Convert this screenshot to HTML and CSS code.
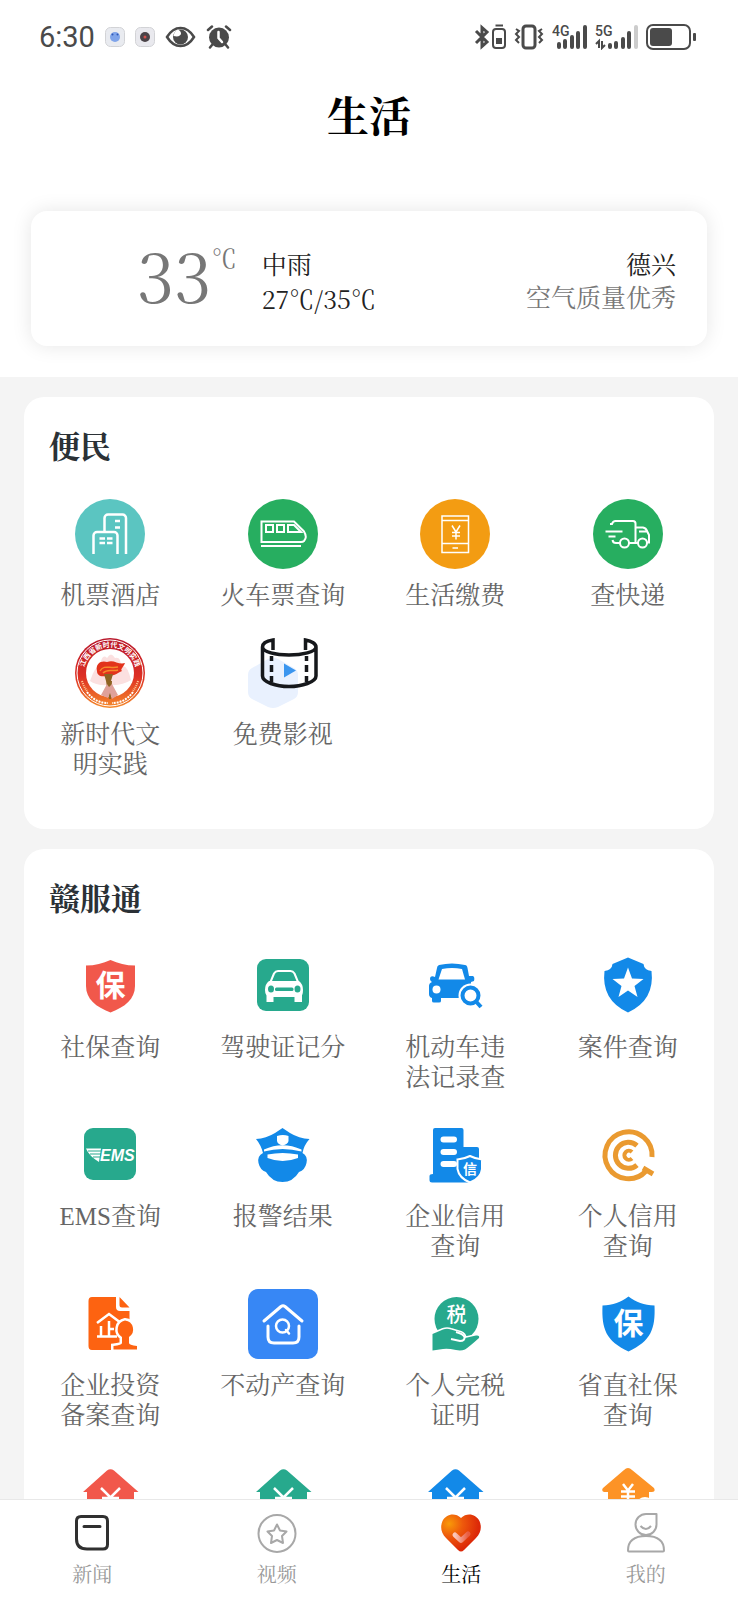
FILE: index.html
```html
<!DOCTYPE html>
<html lang="zh-CN">
<head>
<meta charset="UTF-8">
<meta name="viewport" content="width=device-width, initial-scale=1.0">
<title>生活</title>
<link rel="stylesheet" href="styles.css">
</head>
<body>

<main class="page">
    <header class="top">
        <div class="status">
            <div class="status-side">
                <span class="time">6:30</span>
                <svg width="20" height="20" viewBox="0 0 20 20"><rect x=".5" y=".5" width="19" height="19" rx="5" fill="#e9ebf0" stroke="#d2d3d6"/><circle cx="10" cy="10" r="5" fill="#7fa4ea"/><circle cx="7.500" cy="7.500" r="1" fill="#2f57b5"/><circle cx="12.500" cy="7.500" r="1" fill="#2f57b5"/></svg>
                <svg width="20" height="20" viewBox="0 0 20 20"><rect x=".5" y=".5" width="19" height="19" rx="5" fill="#e9e9ee" stroke="#d2d3d6"/><circle cx="10" cy="10" r="5" fill="#4a4348"/><circle cx="10" cy="10" r="1.500" fill="#d2504c"/></svg>
                <svg width="31" height="22" viewBox="0 0 31 22"><path d="M2 11C6 4.500 10.500 2 15.500 2S25 4.500 29 11C25 17.500 20.500 20 15.500 20S6 17.500 2 11Z" fill="none" stroke="#4a4a4a" stroke-width="2.500"/><circle cx="15.500" cy="11" r="7.500" fill="#4a4a4a"/><path d="M13 3.500C18 6 17 12 8.500 10C9 7 10.500 4.500 13 3.500Z" fill="#fff"/></svg>
                <svg width="26" height="24" viewBox="0 0 26 24" fill="none" stroke="#4a4a4a" stroke-linecap="round"><circle cx="13" cy="12.500" r="10" fill="#4a4a4a" stroke="none"/><path d="M2 5L6 1.500M24 5L20 1.500M6 20L4 22.500M20 20L22 22.500" stroke-width="2.500"/><path d="M12.500 7V13L16 17" stroke="#fff" stroke-width="2.500"/></svg>
            </div>
            <div class="status-side right">
                <svg width="32" height="26" viewBox="0 0 32 26" fill="none" stroke="#4a4a4a" stroke-width="3"><path d="M2 7L13 18L8 22.500V3.500L13 8L2 19"/><rect x="19" y="5" width="12" height="19" rx="3" stroke-width="2"/><path d="M21.500 1.500H29" stroke-width="2"/><rect x="22" y="14" width="6" height="6" fill="#4a4a4a" stroke="none"/></svg>
                <svg width="30" height="26" viewBox="0 0 30 26" fill="none" stroke="#4a4a4a" stroke-width="2"><rect x="9" y="2" width="12" height="22" rx="3" stroke-width="3"/><path d="M2 5L5 7L2 10L5 13L2 16L5 19M28 5L25 7L28 10L25 13L28 16L25 19"/></svg>
                <svg width="35" height="26" viewBox="0 0 35 26"><text class="net" x="0" y="12">4G</text><path d="M7 23V20M13 23V17M20 23V13M26 23V9M33 23V3" stroke="#4a4a4a" stroke-width="4" stroke-linecap="round"/></svg>
                <svg width="43" height="26" viewBox="0 0 43 26"><text class="net" x="0" y="12">5G</text><path d="M4 24V17L1 20M7 17V24L10 21" fill="none" stroke="#4a4a4a" stroke-width="2"/><path d="M15 23V21M21 23V19M28 23V15M34 23V9" stroke="#4a4a4a" stroke-width="4" stroke-linecap="round"/><path d="M41 23V3" stroke="#ccc" stroke-width="4" stroke-linecap="round"/></svg>
                <svg width="50" height="26" viewBox="0 0 50 26"><rect x="1" y="1" width="43" height="24" rx="6" fill="none" stroke="#4a4a4a" stroke-width="2"/><rect x="4" y="4" width="22" height="18" rx="3" fill="#4a4a4a"/><rect x="47" y="9" width="3" height="8" rx="1" fill="#4a4a4a"/></svg>
            </div>
        </div>
        <h1>生活</h1>
        <section class="weather">
            <span class="temp">33</span>
            <span class="unit">℃</span>
            <div class="sky">
                <div>中雨</div>
                <div class="range">27℃/35℃</div>
            </div>
            <div class="city">
                <div>德兴</div>
                <div class="air">空气质量优秀</div>
            </div>
        </section>
    </header>

    <section class="card">
        <h2>便民</h2>
        <div class="grid">
            <a href="#">
                <svg class="icon" viewBox="0 0 70 70" fill="none" stroke="#fff" stroke-width="2.500"><circle cx="35" cy="35" r="35" fill="#5bc5c1" stroke="none"/><path d="M29.500 33V19a3.500 3.500 0 0 1 3.500-3.500H47.500a3.500 3.500 0 0 1 3.500 3.500V55M18.500 55V36.500a3.500 3.500 0 0 1 3.500-3.500H39a3.500 3.500 0 0 1 3.500 3.500V55M40 22H45M40 28.500H45M24.500 39.500H30M32 39.500H37.500M24.500 44H30M32 44H37.500"/></svg>
                <span>机票酒店</span>
            </a>
            <a href="#">
                <svg class="icon" viewBox="0 0 70 70" fill="none" stroke="#fff" stroke-width="2"><circle cx="35" cy="35" r="35" fill="#27ae60" stroke="none"/><path d="M13.500 22.500H46L56 32.500Q59.500 38 56 42Q55 43 53 43H13.500ZM13 47H53M18 26H25V33H18ZM29 26H36V33H29ZM40 26H46L53 33H40Z"/></svg>
                <span>火车票查询</span>
            </a>
            <a href="#">
                <svg class="icon" viewBox="0 0 70 70" fill="none" stroke="#fff" stroke-width="1.500"><circle cx="35" cy="35" r="35" fill="#f39c12" stroke="none"/><path d="M22 17H48.500V53.500H22ZM22 21.500H48.500M22 44.500H48.500M32.500 49H38M32 26.500L36 33L40 26.500M36 33V40.500M32 33.500H40M32 37H40"/></svg>
                <span>生活缴费</span>
            </a>
            <a href="#">
                <svg class="icon" viewBox="0 0 70 70" fill="none" stroke="#fff" stroke-width="2"><circle cx="35" cy="35" r="35" fill="#27ae60" stroke="none"/><path d="M17 25H19Q20 22 22.500 22H40Q42.500 22 42.500 24.500V43.500M12.500 32.500H29.500M15.500 37.500H22.500M19.500 41Q20 44 23 44H27M36 44H45M42.500 28.500H50Q53 29 54 32L56 36V43.500H54M46 32.500H54"/><circle cx="31.500" cy="44" r="4.500"/><circle cx="49.500" cy="44" r="4.500"/></svg>
                <span>查快递</span>
            </a>
            <a href="#">
                <svg class="icon" viewBox="0 0 70 70">
                    <defs>
                        <linearGradient id="seal" x1="0" y1="0" x2="0" y2="1"><stop offset="0" stop-color="#b8172b"/><stop offset=".55" stop-color="#dd2f24"/><stop offset="1" stop-color="#f58a2b"/></linearGradient>
                        <path id="arc" d="M9.500 43A26.500 26.500 0 1 1 60.500 43"/>
                    </defs>
                    <circle cx="35" cy="35" r="35" fill="url(#seal)"/>
                    <circle cx="35" cy="35" r="33" fill="none" stroke="#fff" stroke-width="1"/>
                    <circle cx="35" cy="35" r="24" fill="#fff"/>
                    <path d="M15 43Q20 28 25 28Q27 15 32 20Q36 13 40 20Q46 18 46 29Q52 25 56 42Q47 48 35 47Q21 48 15 43Z" fill="#fbe0e0"/>
                    <text class="seal-text"><textPath href="#arc" startOffset="50%" text-anchor="middle">江西省新时代文明实践</textPath></text>
                    <path d="M22 33C20 25 27 22 32 24C39 21 43 27 50 25C48 30 45 31 47 33C41 36 39 38 31 38C25 39 22 37 22 33Z" fill="#e2331c"/>
                    <path d="M25 33C29 26 35 31 43 29M28 35C33 30 38 34 43 32" fill="none" stroke="#f58b2c" stroke-width="1.500"/>
                    <path d="M29 36H38L36 43H37L36 61H34L31 43Z" fill="#8e6322"/>
                    <path d="M26 57L32 46L34 49L37 46L43 57L37 61L35 55L33 60Z" fill="#dfa19a"/>
                    <path d="M12 54Q20 65 33 65M58 54Q50 65 37 65" fill="none" stroke="#fff" stroke-width="2" stroke-dasharray="2 1"/>
                    <path d="M7 43Q9 49 12 53M63 43Q61 49 58 53" fill="none" stroke="#ffc493" stroke-width="2" stroke-dasharray="1 1"/>
                </svg>
                <span>新时代文<br>明实践</span>
            </a>
            <a href="#">
                <svg class="icon" viewBox="0 0 70 70" fill="none" stroke="#16181b" stroke-width="3.500"><path d="M0 37Q0 32 4 30L20 21Q25 18 30 21L46 30Q50 32 50 37V54Q50 59 46 61L30 69Q25 71 20 69L4 61Q0 59 0 54Z" fill="#e9f1fe" stroke="none"/><path d="M25 12V2C18 3 14.500 6 14.500 9V38C14.500 44 28 48.500 41 48.500S68 44 68 38V9C68 6 64 3 57.500 2V12M14.500 9C14.500 14 28 17 41 17S68 14 68 9M23.500 18V23M23.500 27V34M23.500 38V44M58.500 18V23M58.500 27V34M58.500 38V44"/><path d="M36 25.500L48 32.500L36 39.500Z" fill="#3b96ef" stroke="none"/></svg>
                <span>免费影视</span>
            </a>
        </div>
    </section>

    <section class="card">
        <h2>赣服通</h2>
        <div class="grid">
            <a href="#">
                <svg class="icon" viewBox="0 0 70 70"><path d="M35.500 9C28 12.500 20 14.500 11 14.500V35C11 48 21 56 35.500 61.500C50 56 60 48 60 35V14.500C51 14.500 43 12.500 35.500 9Z" fill="#f1584b"/><text class="glyph bao" x="35.500" y="45">保</text></svg>
                <span>社保查询</span>
            </a>
            <a href="#">
                <svg class="icon" viewBox="0 0 70 70"><rect x="9" y="8" width="52" height="52" rx="9" fill="#27a98d"/><path d="M22.500 31L26 22.500Q27.500 20 30 20H42.500Q45 20 46.500 22.500L50 31" fill="none" stroke="#fff" stroke-width="2"/><path d="M21 30H51Q55 33 55 39Q55 43 54 44.500V51H46.500V46H25.500V51H18.500V44.500Q17 43 17 39Q17 33 21 30Z" fill="#fff"/><g fill="#27a98d"><ellipse cx="23" cy="38" rx="3" ry="3.500"/><ellipse cx="49.500" cy="38" rx="3" ry="3.500"/><rect x="27" y="36.500" width="18.500" height="3.500" rx="1.500"/></g></svg>
                <span>驾驶证记分</span>
            </a>
            <a href="#">
                <svg class="icon" viewBox="0 0 70 70"><path d="M19 14Q32 11 45 14Q47 14 47.500 17L49 25H53Q55 26 54 30L51 31V47H21V50Q21 51.500 19 51.500H14Q12 51.500 12 50V47Q9 46 9 43V35Q9 32 12 31Q9 29 10.500 26Q12 24.500 15 26L17 17Q17 15 19 14Z" fill="#1289e8"/><path d="M22 18Q32 16 42 18L45 28.500H18.500Z" fill="#fff"/><circle cx="16.500" cy="38.500" r="4" fill="#fff"/><circle cx="50.500" cy="44.500" r="12" fill="#fff"/><circle cx="50.500" cy="44.500" r="8" fill="#fff" stroke="#1289e8" stroke-width="4"/><path d="M56 50.500L61 56" stroke="#1289e8" stroke-width="4"/></svg>
                <span>机动车违<br>法记录查</span>
            </a>
            <a href="#">
                <svg class="icon" viewBox="0 0 70 70"><path d="M35 6.500L50.500 13Q51 19 58.500 20Q62 49 35 61.500Q8 49 11.500 20Q19 19 19.500 13Z" fill="#1289e8"/><path d="M35 16.500L39 27.500L50.500 28L41.500 35L44.500 46L35 39.500L25.500 46L28.500 35L19.500 28L31 27.500Z" fill="#fff"/></svg>
                <span>案件查询</span>
            </a>
            <a href="#">
                <svg class="icon" viewBox="0 0 70 70"><rect x="9" y="8" width="52" height="52" rx="9" fill="#27a98d"/><path d="M11 28.500H26L24 42Q14 36 11 28.500Z" fill="#fff"/><path d="M13 31H26M15 34H26M18 37H26" stroke="#27a98d" stroke-width="1"/><text class="ems" x="25" y="41">EMS</text></svg>
                <span>EMS查询</span>
            </a>
            <a href="#">
                <svg class="icon" viewBox="0 0 70 70"><path d="M34.500 8L42 13Q51 18.500 61.500 19Q56 25 54.500 33Q60 36 58.500 43Q57 50 51 52Q45 62 34.500 62T18 52Q12 50 10.500 43Q9 36 15 33Q13 25 8 19Q18 18.500 27 13Z" fill="#1289e8"/><path d="M29 16Q35 14 40.500 16V21Q40 24 34.500 25.500Q29.500 24 29 21Z" fill="#fff"/><path d="M16 29.500Q34.500 21 53.500 29.500V31.500Q34.500 26.500 16 31.500ZM19.500 34.500Q34.500 31.500 50 34.500V38Q34.500 44 19.500 38Z" fill="#fff"/></svg>
                <span>报警结果</span>
            </a>
            <a href="#">
                <svg class="icon" viewBox="0 0 70 70"><path d="M15 8H41.500Q43.500 8 43.500 10V27H57Q59 27 59 29V48L50 62.500H12Q9.500 62.500 9.500 60V56Q9.500 54 13 54V10Q13 8 15 8Z" fill="#1289e8"/><path d="M23.500 19.500H34M23.500 32H34M23.500 44H34" stroke="#fff" stroke-width="6" stroke-linecap="round"/><path d="M50 36Q44 39 37.500 39.500V49Q39 58 50 62.500Q61 58 62 49V39.500Q56 39 50 36Z" fill="#1289e8" stroke="#fff" stroke-width="2"/><text class="glyph xin" x="50" y="54">信</text></svg>
                <span>企业信用<br>查询</span>
            </a>
            <a href="#">
                <svg class="icon" viewBox="0 0 70 70" fill="none" stroke="#ea9a30" stroke-width="5"><path d="M53 51A23.500 23.500 0 1 1 59 37M50 48L60 54M44 25.500A13 13 0 1 0 44 45"/><path d="M39 32A4.500 4.500 0 1 0 39 38.500" stroke-width="4"/></svg>
                <span>个人信用<br>查询</span>
            </a>
            <a href="#">
                <svg class="icon" viewBox="0 0 70 70"><path d="M17 8H41V18Q41 22 45 22H54.500V40L50 61H17Q13.500 61 13.500 57V12Q13.500 8 17 8ZM44.500 8L54.500 18.500H47Q44.500 18.500 44.500 16Z" fill="#fd6311"/><path d="M22 34L34 25L46 34M34 32V47M26 37V47M34 40H39M22 47.500H42" fill="none" stroke="#fff" stroke-width="2.500"/><path d="M50 31.500A9 9 0 0 1 54 48V54Q54 56 62 57V60.500H38.500V57Q47 56 47 54V48A9 9 0 0 1 50 31.500Z" fill="#fd6311" stroke="#fff" stroke-width="5" paint-order="stroke"/></svg>
                <span>企业投资<br>备案查询</span>
            </a>
            <a href="#">
                <svg class="icon" viewBox="0 0 70 70" fill="none" stroke="#fff" stroke-width="3" stroke-linecap="round" stroke-linejoin="round"><rect width="70" height="70" rx="10" fill="#3787f5" stroke="none"/><path d="M16 32L33 17.500Q35 16 37 17.500L54 32M20 37V48Q20 54 26 54H45Q51 54 51 48V37"/><circle cx="34.500" cy="37" r="6.500" stroke-width="2.500"/><path d="M38 41L41 44.500" stroke-width="2.500"/></svg>
                <span>不动产查询</span>
            </a>
            <a href="#">
                <svg class="icon" viewBox="0 0 70 70"><circle cx="36.500" cy="30" r="22" fill="#27a98d"/><path d="M12.500 45L23 40.500Q27 39 31 40.500L41 43.500Q45 45 45 49L56 46.500Q60 46 59 49Q49 58 45 60.500Q41 62 36 61Q27 59 23 60L12.500 61.500Z" fill="#27a98d" stroke="#fff" stroke-width="3" paint-order="stroke"/><path d="M31 50L40 52Q45 52 44.500 48Q43.500 45 36 43" fill="none" stroke="#fff" stroke-width="2"/><text class="glyph shui" x="36.500" y="33">税</text></svg>
                <span>个人完税<br>证明</span>
            </a>
            <a href="#">
                <svg class="icon" viewBox="0 0 70 70"><path d="M35.500 7.500C28 13 20 16 9.500 16.500C8.500 40 13 52 35.500 62.500C58 52 62.500 40 61.500 16.500C51 16 43 13 35.500 7.500Z" fill="#1289e8"/><text class="glyph bao" x="35.500" y="45">保</text></svg>
                <span>省直社保<br>查询</span>
            </a>
            <a href="#">
                <svg class="icon" viewBox="0 0 70 70"><path d="M32 12.500Q35.500 10 39 12.500L63.500 34H59V62H12V34H8Z" fill="#f1584b"/><path d="M26 30L35.500 39.500L45 30M35.500 40V55M27 40H44M27 47H44" fill="none" stroke="#fff" stroke-width="2.500"/></svg>
            </a>
            <a href="#">
                <svg class="icon" viewBox="0 0 70 70"><path d="M32 12.500Q35.500 10 39 12.500L63.500 34H59V62H12V34H8Z" fill="#27a98d"/><path d="M26 30L35.500 39.500L45 30M35.500 40V55M27 40H44M27 47H44" fill="none" stroke="#fff" stroke-width="2.500"/></svg>
            </a>
            <a href="#">
                <svg class="icon" viewBox="0 0 70 70"><path d="M32 12.500Q35.500 10 39 12.500L63.500 34H59V62H12V34H8Z" fill="#1289e8"/><path d="M26 30L35.500 39.500L45 30M35.500 40V55M27 40H44M27 47H44" fill="none" stroke="#fff" stroke-width="2.500"/></svg>
            </a>
            <a href="#">
                <svg class="icon" viewBox="0 0 70 70"><path d="M31 12Q35 8 39 12L61 30Q63 34 59 34H56V62H15V34H11Q8 33 10 30Z" fill="#fd9326"/><path d="M30 26L35 32.500L40 26M35 32V45M28 33.500H42M28 38.500H42" fill="none" stroke="#fff" stroke-width="2.500"/><circle cx="52" cy="48" r="9" fill="#fff"/></svg>
            </a>
        </div>
    </section>
</main>

<nav class="tabs">
    <a href="#">
        <svg class="tab-icon" viewBox="0 0 40 40" fill="none" stroke="#303030" stroke-width="3" stroke-linecap="round"><path d="M9 3.500H31Q35.500 3.500 35.500 8V31.500Q35.500 36 31 36H15Q4.500 36 4.500 26V8Q4.500 3.500 9 3.500ZM12 13.500H28"/></svg>
        <span>新闻</span>
    </a>
    <a href="#">
        <svg class="tab-icon" viewBox="0 0 40 40" fill="none" stroke="#a8a8a8" stroke-width="2" stroke-linejoin="round"><circle cx="20" cy="20.500" r="18.500"/><path d="M20 11.500L23 17.500L29.500 18.500L25 23L26 30L20 27L14 30L15 23L10.500 18.500L17 17.500Z"/></svg>
        <span>视频</span>
    </a>
    <a href="#" class="active">
        <svg class="tab-icon" viewBox="0 0 40 40">
            <defs>
                <radialGradient id="heart" cx=".2" cy=".25" r=".75"><stop offset="0" stop-color="#f99a08"/><stop offset=".45" stop-color="#ee5a0c"/><stop offset="1" stop-color="#dc2808"/></radialGradient>
                <linearGradient id="tick" x1="0" y1="0" x2="1" y2="0"><stop offset="0" stop-color="#fbc7bb"/><stop offset="1" stop-color="#e95c40"/></linearGradient>
            </defs>
            <path d="M20 5C14-1 5 1 1.500 8C-1 14 0 20 5 25L17 37Q20 40 23 37L35 25C40 20 41 14 38.500 8C35 1 26-1 20 5Z" fill="url(#heart)"/>
            <path d="M14 22L20 27.500L27 21" fill="none" stroke="url(#tick)" stroke-width="5" stroke-linecap="round" stroke-linejoin="round"/>
        </svg>
        <span>生活</span>
    </a>
    <a href="#">
        <svg class="tab-icon" viewBox="0 0 40 40" fill="none" stroke="#a8a8a8" stroke-width="2" stroke-linejoin="round"><path d="M30.500 1H20A10.500 10.500 0 1 0 30.500 11.500ZM14.500 13Q20 19 25 13M2 37.500Q2 23 20 23T38 37.500Q38 38.500 37 38.500H3Q2 38.500 2 37.500Z"/></svg>
        <span>我的</span>
    </a>
</nav>

</body>
</html>
```

FILE: styles.css
```css
* {
    box-sizing: border-box;
}
body {
    margin: 0;
    height: 100vh;
    display: flex;
    flex-direction: column;
    font-family: "Liberation Serif", "Noto Serif CJK SC", "Noto Sans CJK SC", serif;
    background-color: #f4f4f4;
    color: #222;
}
a {
    color: inherit;
    text-decoration: none;
}
svg {
    display: block;
    flex: none;
}
.page {
    flex: 1;
    min-height: 0;
    overflow-y: auto;
    scrollbar-width: none;
}

/* header */
.top {
    background-color: #fff;
    padding-bottom: 31px;
}
.status {
    display: flex;
    justify-content: space-between;
    padding: 0 42px 0 39px;
    height: 74px;
}
.status-side {
    display: flex;
    align-items: center;
    gap: 10px;
}
.status-side.right {
    gap: 8px;
}
.time {
    font-family: Roboto, sans-serif;
    font-size: 29px;
    color: #4a4a4a;
}
.net {
    font-family: Roboto, sans-serif;
    font-size: 14px;
    font-weight: 500;
    fill: #4a4a4a;
}
h1 {
    margin: 0;
    font-size: 42px;
    line-height: 88px;
    text-align: center;
    color: #000;
}
.weather {
    display: flex;
    align-items: flex-start;
    margin: 49px 31px 0;
    padding: 38px 31px 31px 106px;
    border-radius: 16px;
    background-color: #fff;
    box-shadow: 0 0 20px rgba(0, 0, 0, 0.1);
    font-size: 25px;
    line-height: 33px;
}
.temp,
.unit,
.range {
    font-family: "Noto Serif CJK JP", "Noto Serif CJK SC", "Liberation Serif", serif;
}
.temp {
    font-size: 67px;
    line-height: 50px;
    color: #777;
}
.unit {
    line-height: 16px;
    color: #777;
}
.sky {
    margin-left: 25px;
}
.city {
    margin-left: auto;
    text-align: right;
}
.air {
    color: #777;
}

/* service cards */
.card {
    margin: 20px 24px 0;
    padding-bottom: 22px;
    border-radius: 20px;
    background-color: #fff;
}
h2 {
    margin: 0;
    padding: 27px 25px 27px;
    font-size: 31px;
    line-height: 48px;
    color: #2b3136;
}
.grid {
    display: grid;
    grid-template-columns: repeat(4, 1fr);
}
.grid a {
    display: flex;
    flex-direction: column;
    align-items: center;
    gap: 12px;
    padding-bottom: 27px;
    font-size: 25px;
    line-height: 30px;
    text-align: center;
    color: #666;
}
.icon {
    width: 70px;
    height: 70px;
}
.glyph {
    font-family: "Noto Sans CJK SC", sans-serif;
    fill: #fff;
    text-anchor: middle;
}
.bao {
    font-size: 30px;
    font-weight: 700;
}
.xin {
    font-size: 14px;
    font-weight: 700;
}
.shui {
    font-size: 20px;
    font-weight: 500;
}
.ems {
    font-family: "Liberation Sans", sans-serif;
    font-size: 16px;
    font-weight: 700;
    font-style: italic;
    fill: #fff;
}
.seal-text {
    font-family: "Noto Sans CJK SC", sans-serif;
    font-size: 7px;
    font-weight: 700;
    fill: #fff;
}

/* bottom tabs */
.tabs {
    display: grid;
    grid-template-columns: repeat(4, 1fr);
    border-top: 1px solid #e8e8e8;
    background-color: #fff;
}
.tabs a {
    display: flex;
    flex-direction: column;
    align-items: center;
    gap: 10px;
    padding: 13px 0;
    font-size: 20px;
    line-height: 24px;
    color: #999;
}
.tab-icon {
    width: 40px;
    height: 40px;
}
.tabs .active {
    color: #000;
}
```
